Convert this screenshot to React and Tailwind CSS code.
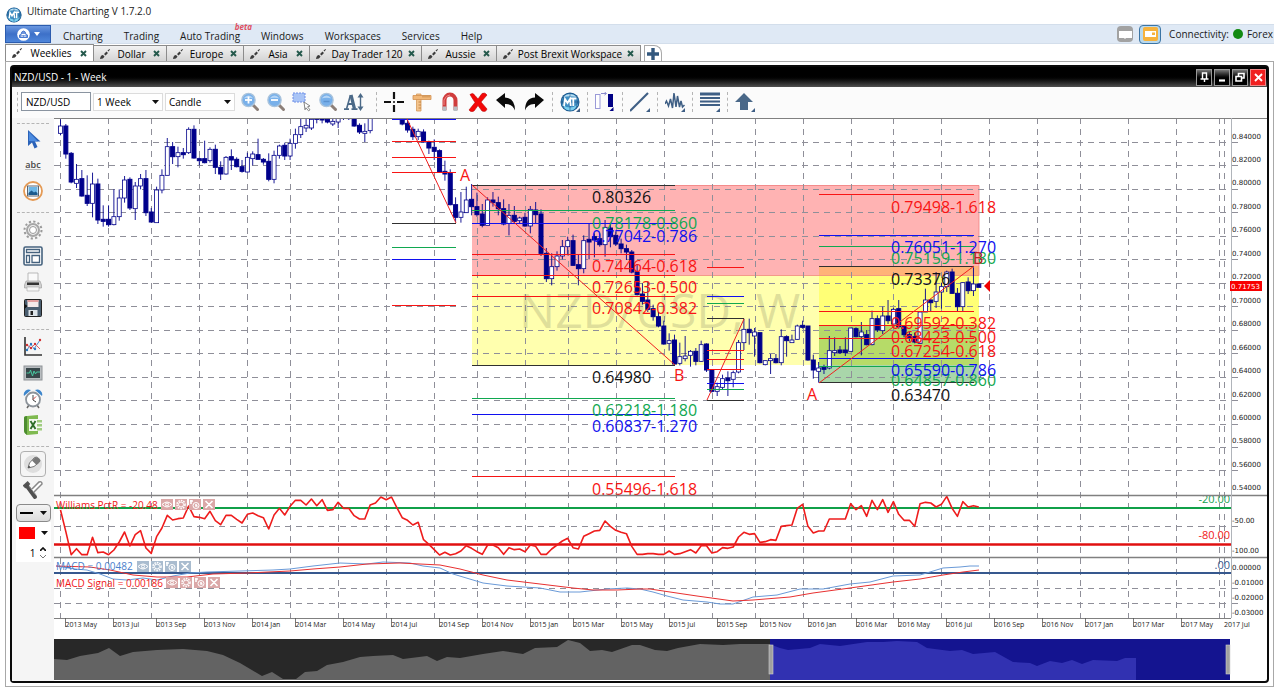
import React from 'react';

const X0 = 60.5;
const STEP = 5.339;
const PLOT_TOP = 118;

const menus = ['Charting', 'Trading', 'Auto Trading', 'Windows', 'Workspaces', 'Services', 'Help'];

const tabs = [
  { name: 'Weeklies', width: 'w-[89px]', active: true },
  { name: 'Dollar', width: 'w-[73px]' },
  { name: 'Europe', width: 'w-[77px]' },
  { name: 'Asia', width: 'w-[66px]' },
  { name: 'Day Trader 120', width: 'w-[112px]' },
  { name: 'Aussie', width: 'w-[75px]' },
  { name: 'Post Brexit Workspace', width: 'w-[144px]' },
];

// candles: high, body top, body bottom, low, filled (thirds of a unit below base)
const candleRuns = [
  {
    start: 0,
    base: 110,
    rows: [
      [28, 48, 70, 76, 0], [42, 48, 132, 146, 1], [126, 130, 216, 220, 1], [162, 208, 220, 234, 0],
      [180, 206, 258, 260, 1], [196, 256, 280, 288, 1], [188, 222, 280, 322, 0], [206, 222, 330, 342, 1],
      [286, 328, 334, 350, 1], [286, 328, 344, 350, 1], [238, 320, 344, 346, 0], [238, 264, 320, 332, 0],
      [198, 210, 264, 278, 0], [202, 208, 294, 300, 1], [216, 228, 296, 330, 0], [192, 206, 228, 238, 0],
      [180, 206, 308, 318, 1], [294, 306, 336, 338, 1], [230, 240, 338, 338, 0], [178, 196, 240, 250, 0],
      [84, 110, 196, 196, 0], [96, 110, 140, 162, 1], [110, 128, 140, 172, 0], [114, 128, 134, 146, 1],
      [52, 58, 128, 132, 0], [46, 58, 144, 146, 1], [142, 146, 152, 166, 1], [92, 146, 158, 160, 1],
      [112, 118, 152, 158, 0], [104, 118, 172, 192, 1], [154, 172, 192, 210, 1], [138, 142, 192, 194, 0],
      [118, 140, 150, 180, 1], [142, 148, 170, 172, 1], [150, 170, 184, 188, 1], [128, 142, 186, 188, 0],
      [124, 132, 146, 166, 0], [86, 134, 148, 148, 1], [144, 148, 156, 164, 1], [130, 154, 208, 214, 1],
      [122, 136, 208, 220, 0], [104, 108, 136, 146, 0], [98, 106, 138, 150, 1], [86, 100, 138, 150, 0],
      [56, 74, 100, 116, 0], [24, 50, 74, 84, 0], [20, 46, 54, 66, 0], [10, 28, 54, 60, 0],
      [0, 20, 28, 40, 1], [0, 20, 30, 40, 1], [10, 28, 36, 40, 1], [0, 34, 42, 48, 0],
      [0, 24, 36, 54, 0], [0, 18, 25, 30, 1], [0, 16, 26, 30, 0], [0, 20, 48, 50, 1],
      [40, 46, 66, 72, 1], [40, 64, 70, 96, 0], [0, 22, 62, 70, 0],
    ],
  },
  {
    start: 64,
    base: 110,
    rows: [
      [10, 24, 42, 46, 1], [30, 40, 60, 68, 1], [50, 58, 80, 90, 1], [56, 64, 80, 90, 0],
      [58, 66, 96, 98, 1], [92, 96, 114, 132, 1], [88, 112, 124, 150, 1], [118, 122, 186, 188, 1],
      [152, 184, 192, 212, 1], [178, 190, 284, 286, 1], [262, 284, 322, 336, 1], [246, 306, 322, 338, 0],
      [230, 270, 308, 308, 0], [222, 268, 290, 316, 1], [248, 290, 314, 320, 1], [282, 312, 346, 352, 1],
      [262, 270, 346, 346, 0],
    ],
  },
  {
    start: 81,
    base: 170,
    rows: [
      [66, 90, 98, 110, 1], [80, 98, 116, 136, 1], [88, 116, 162, 166, 1], [102, 136, 160, 196, 0],
      [108, 136, 154, 162, 1], [140, 144, 152, 160, 0], [128, 142, 168, 170, 1], [108, 118, 168, 190, 0],
      [96, 120, 134, 160, 1], [118, 132, 250, 258, 1], [234, 250, 326, 336, 1], [250, 290, 326, 346, 0],
      [244, 258, 290, 302, 0], [210, 230, 258, 268, 0], [200, 212, 230, 256, 0], [194, 212, 286, 288, 1],
      [254, 284, 296, 346, 1], [196, 212, 296, 310, 0], [162, 208, 216, 268, 1], [190, 200, 210, 262, 1],
      [190, 206, 224, 230, 1], [150, 172, 224, 260, 0], [158, 174, 200, 232, 1], [184, 196, 222, 228, 1],
      [206, 222, 236, 250, 1], [224, 236, 246, 270, 1], [240, 246, 306, 310, 1], [282, 306, 374, 376, 1],
      [340, 372, 394, 404, 1], [334, 390, 418, 426, 1], [404, 416, 440, 452, 1], [426, 440, 468, 472, 1],
      [452, 468, 522, 524, 1], [490, 512, 520, 542, 0], [494, 510, 582, 584, 1], [518, 560, 580, 586, 0],
      [498, 558, 566, 574, 0],
    ],
  },
  {
    start: 118,
    base: 250,
    rows: [
      [300, 304, 316, 350, 0], [294, 304, 334, 346, 1], [272, 284, 334, 336, 0], [280, 282, 360, 366, 1],
      [358, 360, 424, 428, 1], [398, 410, 424, 438, 0], [374, 386, 412, 418, 0], [364, 384, 392, 438, 1],
      [362, 368, 388, 412, 0], [270, 278, 366, 370, 0], [206, 238, 278, 300, 0], [206, 238, 248, 284, 1],
      [234, 246, 258, 320, 0], [248, 248, 338, 340, 1], [330, 332, 344, 346, 0], [312, 326, 332, 372, 0],
      [312, 326, 338, 340, 1], [238, 260, 338, 346, 0], [256, 260, 272, 320, 1], [254, 270, 278, 278, 0],
      [224, 228, 268, 270, 0], [212, 226, 232, 236, 1], [228, 228, 330, 332, 1], [314, 330, 360, 386, 1],
      [336, 354, 364, 398, 0], [344, 352, 358, 372, 1], [258, 302, 354, 358, 0], [262, 302, 308, 318, 0],
      [288, 300, 308, 312, 1], [262, 300, 308, 318, 1], [234, 234, 304, 304, 0], [232, 236, 260, 262, 1],
      [216, 246, 260, 316, 0], [240, 254, 284, 286, 1], [182, 206, 284, 286, 0], [196, 206, 240, 246, 1],
      [170, 198, 242, 252, 0], [150, 198, 212, 222, 1], [174, 178, 222, 224, 0], [150, 176, 230, 236, 1],
      [226, 230, 254, 262, 1], [246, 254, 262, 274, 1], [248, 260, 276, 280, 1], [184, 186, 280, 282, 0],
      [116, 150, 186, 186, 0], [148, 150, 158, 184, 1], [66, 126, 154, 174, 0], [98, 110, 126, 176, 0],
      [62, 66, 110, 126, 0], [56, 66, 130, 132, 1], [114, 130, 170, 184, 1], [96, 98, 170, 186, 0],
      [82, 96, 122, 132, 1], [52, 102, 122, 138, 0], [102, 102, 112, 112, 1],
    ],
  },
];

const williams = [
  75, 140, 209, 191, 209, 209, 157, 203, 201, 209, 195, 171, 141, 183, 149, 137, 189, 205, 155, 129, 91,
  105, 101, 99, 63, 95, 97, 101, 79, 107, 119, 91, 91, 103, 114, 88, 84, 92, 98, 132, 90, 70, 90, 64, 46,
  46, 60, 42, 62, 44, 76, 74, 52, 70, 70, 92, 102, 102, 60, 54, 36, 44, 36, 68, 98, 106, 120, 112, 164,
  178, 194, 210, 202, 210, 206, 198, 182, 190, 200, 208, 180, 180, 188, 208, 188, 194, 192, 200, 180, 184,
  208, 208, 192, 180, 168, 160, 188, 192, 154, 146, 138, 136, 108, 124, 136, 142, 146, 184, 208, 208, 206,
  206, 208, 208, 198, 208, 206, 200, 194, 204, 182, 182, 204, 200, 188, 190, 186, 156, 142, 148, 146, 172,
  170, 164, 166, 124, 122, 120, 70, 58, 124, 144, 138, 138, 102, 102, 102, 102, 56, 74, 62, 94, 46, 74, 44,
  82, 50, 88, 106, 106, 124, 56, 52, 54, 66, 58, 34, 70, 94, 50, 66, 62, 66,
];

const macd =
  '56,566 75,569 87,570 100,574 113,579 127,580 143,578 157,580 173,576 190,573 207,572 240,571 273,570 290,569 313,566 340,563 367,564 383,562 410,563 423,566 440,568 453,574 483,583 507,586 540,588 560,592 580,592 607,589 627,588 640,589 653,592 667,596 683,600 707,602 720,604 733,604 753,597 777,595 800,589 823,589 850,584 870,582 893,576 920,575 943,568 960,567 970,566 979,566';
const macdSignal =
  '56,566 90,567 110,570 133,575 157,577 187,577 213,574 247,573 290,571 313,569 340,567 367,564 400,563 440,565 460,569 483,575 507,580 540,584 573,588 593,590 617,590 640,589 650,589 670,592 697,596 733,601 753,600 790,597 813,593 850,588 893,582 920,579 943,575 963,572 979,570';

const navigator =
  '54,680 54,659 67,660 80,656 98,653 109,648 120,656 133,652 157,650 183,649 207,651 223,655 240,663 262,676 272,672 283,679 296,679 305,672 317,671 327,665 343,662 360,657 373,656 393,655 403,659 427,656 437,661 447,657 460,658 483,654 503,651 523,654 535,648 557,647 568,640 580,643 590,651 602,650 612,652 632,645 640,645 655,650 667,651 678,648 700,644 723,645 740,644 769,644 780,648 788,650 810,648 820,644 840,646 867,642 883,642 897,641 917,642 927,648 950,651 962,650 973,654 995,652 1013,662 1030,663 1037,666 1050,661 1062,663 1072,660 1082,664 1093,660 1117,661 1125,658 1136,658 1136,680';

const gridX = [
  60.5, 108.5, 151.5, 199.5, 247.5, 290.5, 338.5, 386.5, 434.5, 477.5, 525.5, 568.5, 616.5, 664.5, 712.5, 755.5,
  803.5, 851.5, 893.5, 941.5, 989.5, 1037.5, 1080.5, 1128.5, 1176.5, 1219.5, 1224.5,
];
const gridY = [142.5, 165.5, 189.5, 212.5, 236.5, 259.5, 283.5, 306.5, 330.5, 353.5, 377.5, 400.5, 424.5, 447.5, 470.5, 526.5, 588.5, 603.5];

const months = [
  '2013 May', '2013 Jul', '2013 Sep', '2013 Nov', '2014 Jan', '2014 Mar', '2014 May', '2014 Jul', '2014 Sep',
  '2014 Nov', '2015 Jan', '2015 Mar', '2015 May', '2015 Jul', '2015 Sep', '2015 Nov', '2016 Jan', '2016 Mar',
  '2016 May', '2016 Jul', '2016 Sep', '2016 Nov', '2017 Jan', '2017 Mar', '2017 May',
];

const prices = Array.from({ length: 16 }, (_, i) => ({
  label: (0.84 - i * 0.02).toFixed(5),
  y: 138.5 + i * 23.46,
}));

const RED = '#f81414';
const BLUE = '#1010f0';
const GREEN = '#10a850';
const BLACK = '#303030';

const fibLines = [
  { x1: 392, x2: 456, lines: [[119.5, BLUE], [141.5, RED], [157.5, RED], [172.5, RED], [223.5, BLACK], [247.5, GREEN], [259.5, BLUE], [305.5, RED]] },
  { x1: 472, x2: 675, lines: [[185.5, BLACK], [210.5, GREEN], [223.5, BLUE], [254.5, RED], [275.5, RED], [296.5, RED], [365.5, BLACK], [398.5, GREEN], [414.5, BLUE], [476.5, RED]] },
  { x1: 707, x2: 744, lines: [[267.5, RED], [296.5, BLUE], [303.5, GREEN], [318.5, BLACK], [350.5, RED], [359.5, RED], [369.5, RED], [383.5, BLUE], [389.5, GREEN], [400.5, BLACK]] },
  { x1: 819, x2: 974, lines: [[194.5, RED], [235.5, BLUE], [246.5, GREEN], [266.5, BLACK], [311.5, RED], [325.5, RED], [338.5, RED], [358.5, BLUE], [366.5, GREEN], [382.5, BLACK]] },
];

const trendLines = [
  [407, 119, 456, 223],
  [472, 185, 675, 365],
  [707, 400, 744, 319],
  [819, 383, 974, 266],
];

const fibLabels = [
  [592, 203, '0.80326', '#111'], [592, 229, '0.78178-0.860', GREEN], [592, 242, '0.77042-0.786', BLUE],
  [592, 272, '0.74464-0.618', RED], [592, 293, '0.72653-0.500', RED], [592, 314, '0.70842-0.382', RED],
  [592, 383, '0.64980', '#111'], [592, 416, '0.62218-1.180', GREEN], [592, 432, '0.60837-1.270', BLUE],
  [592, 495, '0.55496-1.618', RED], [891, 213, '0.79498-1.618', RED], [891, 264, '0.75159-1.180', GREEN],
  [891, 253, '0.76051-1.270', BLUE], [891, 285, '0.73376', '#111'], [891, 329, '0.69592-0.382', RED],
  [891, 343, '0.68423-0.500', RED], [891, 357, '0.67254-0.618', RED], [891, 386, '0.64857-0.860', GREEN],
  [891, 376, '0.65590-0.786', BLUE], [891, 401, '0.63470', '#111'], [460, 181, 'A', RED], [674, 381, 'B', RED],
  [807, 400, 'A', RED], [973, 264, 'B', '#c02020'],
];

const GlobeLogo = ({ size }) => (
  <svg width={size} height={size} viewBox="0 0 20 20" aria-hidden="true">
    <circle cx="10" cy="10" r="9.5" fill="#17558c" />
    <circle cx="10" cy="10" r="8.6" fill="#3f8fc4" />
    <path d="M1.6 12 Q10 19 18.4 12 Q15 18.6 10 18.6 Q4 18 1.6 12Z" fill="#7cd0ee" />
    <path d="M3 5 Q10 -1 17 5 Q10 3.4 3 5Z" fill="#b9def2" />
    <path d="M10 1v18M1 10h18M4 3.5q-3 6.5 0 13M16 3.5q3 6.5 0 13" stroke="#1c4f80" strokeWidth=".6" fill="none" />
    <path d="M4 14l1-7 2.5 4L10 7l.7 7M9.5 6.5h7M13.3 6.5V14" stroke="#fff" strokeWidth="1.8" fill="none" />
  </svg>
);

const Zoom = ({ sign }) => (
  <svg width="20" height="20" viewBox="0 0 20 20" aria-hidden="true">
    <path d="M13 13l4.5 4.5" stroke="#8c7f78" strokeWidth="3" strokeLinecap="round" />
    <circle cx="8.5" cy="8" r="6.6" fill="#78b0ea" stroke="#a9c3dc" strokeWidth="1.4" />
    <path d="M3.5 6.5q5-6 10 0q-5-1.5-10 0z" fill="#b5d5f6" />
    {sign !== 'rect' && <path d="M5 8h7" stroke="#fff" strokeWidth="1.8" />}
    {sign === 'in' && <path d="M8.5 4.5v7" stroke="#fff" strokeWidth="1.8" />}
    {sign === 'rect' && <path d="M5.5 9.5h6" stroke="#5b93d0" strokeWidth="1.5" />}
  </svg>
);

const Corner = () => <path d="M20 16v4h-4z" fill="#3f5f85" />;

const Icon = ({ children }) => (
  <svg width="20" height="20" viewBox="0 0 20 20" aria-hidden="true">
    {children}
  </svg>
);

const viewTools = [
  ['Zoom in', <Zoom sign="in" />],
  ['Zoom out', <Zoom sign="out" />],
  ['Select area', (
    <Icon>
      <rect x="1" y="1" width="12" height="9" fill="#a9c4f6" stroke="#6f8ee6" strokeDasharray="2 1" />
      <path d="M12 10l6 4-2.5.8 2.5 3-1.5 1-2.5-3-1 2z" fill="#fff" stroke="#777" strokeWidth=".9" />
    </Icon>
  )],
  ['Zoom to fit', <Zoom sign="rect" />],
  ['Auto scale', (
    <Icon>
      <path d="M2.5 17L6.5 3" stroke="#4c6a88" strokeWidth="1.6" fill="none" />
      <path d="M7 3l3.500 14" stroke="#4c6a88" strokeWidth="3.200" fill="none" />
      <path d="M4 12h6M0 17.200h5M7.500 17.200h6" stroke="#4c6a88" strokeWidth="1.800" fill="none" />
      <path d="M16.500 4v12" stroke="#4c6a88" strokeWidth="1.400" />
      <path d="M16.500 1l3 4.500h-6zM16.500 19l3-4.500h-6z" fill="#4c6a88" />
    </Icon>
  )],
];

const editTools = [
  ['Crosshair', (
    <Icon>
      <path d="M10 0v7M10 13v7M0 10h7M13 10h7" stroke="#111" strokeWidth="2.2" />
      <path d="M10 9v2" stroke="#111" strokeWidth="1.5" />
    </Icon>
  )],
  ['Ruler', (
    <Icon>
      <path d="M4.500 2h4.500v17H4.500z" fill="#f4c48c" stroke="#d69a5c" strokeWidth=".8" />
      <path d="M1 3.500h18v4H1z" fill="#f2b878" stroke="#d29150" strokeWidth=".8" />
      <path d="M11 3.500v2M13 3.500v2M15 3.500v2M17 3.500v2M6.500 10h2.500M6.500 13h2.500M6.500 16h2.500" stroke="#b87838" strokeWidth=".8" />
    </Icon>
  )],
  ['Snap', (
    <Icon>
      <path d="M4.500 18V8.500a5.500 6 0 0 1 11 0V18" fill="none" stroke="#d03c3c" strokeWidth="4" />
      <path d="M4.500 14.500V19M15.500 14.500V19" stroke="#b9bdc2" strokeWidth="4" />
      <path d="M4 13V8q2-5 6-5" fill="none" stroke="#ea8a8a" strokeWidth="1" />
    </Icon>
  )],
  ['Delete', (
    <Icon>
      <path d="M2 2.500q3-2.500 5 1l3 3.500 4-5.500q3-1.500 5 1.500l-6 7 6 7q-1 3.500-5 2l-4-5.500-4 5.500q-3 2-5-1l6-7.500z" fill="#f40808" stroke="#b80808" strokeWidth=".6" />
    </Icon>
  )],
  ['Undo', (
    <Icon>
      <path d="M0 8l9-7v4.500q10 .5 10 13q-2.500-7-10-6.500v4z" fill="#0a0a0a" />
    </Icon>
  )],
  ['Redo', (
    <Icon>
      <path d="M20 8l-9-7v4.500q-10 .5-10 13q2.500-7 10-6.500v4z" fill="#0a0a0a" />
    </Icon>
  )],
];

const studyTools = [
  ['Templates', (
    <span className="relative">
      <GlobeLogo size={20} />
      <svg className="absolute bottom-0 right-0" width="4" height="4" viewBox="0 0 4 4"><path d="M4 0v4H0z" fill="#3f5f85" /></svg>
    </span>
  )],
  ['Candles', (
    <Icon>
      <rect x=".5" y="2.5" width="4.5" height="14" fill="#fff" stroke="#9a9ad8" />
      <path d="M6 1.5h5M9.5 0l2 1.5-2 1.5" stroke="#8888cc" fill="none" />
      <rect x="13" y="2" width="5" height="13" fill="#000084" />
      <path d="M18.5 15v4h-4z" fill="#000084" />
    </Icon>
  )],
  ['Line', <Icon><path d="M0 19L18 1" stroke="#3f5f85" strokeWidth="2.2" /><Corner /></Icon>],
  ['Waves', (
    <Icon>
      <path d="M0 12l1.500-3 2 5 2-7 2 9L9 1l2 14 1.500-11 2 11 1.500-6 1.500 6 2-2" fill="none" stroke="#3f5f85" strokeWidth="1.5" />
      <Corner />
    </Icon>
  )],
  ['Levels', (
    <Icon>
      <path d="M0 2h20" stroke="#3f5f85" strokeWidth="3" />
      <path d="M0 6h20M0 9.5h20M0 13h20" stroke="#3f5f85" strokeWidth="2" />
      <Corner />
    </Icon>
  )],
  ['Arrow', <Icon><path d="M9 1l9 9h-5v8H5v-8H0z" fill="#4a6888" /><Corner /></Icon>],
];

const sideTools = [
  [
    ['Pointer', (
      <Icon>
        <path d="M5 1v16l4-3.5 2.5 6 3-1.5-2.5-5.5h5.5z" fill="#2a62b8" />
        <path d="M6 3v9l9 .5z" fill="#4b8be0" />
      </Icon>
    )],
    ['Text', <span className="border-b border-[#bbb] text-[9px] leading-none font-semibold text-[#444]">abc</span>],
    ['Picture', (
      <Icon>
        <circle cx="10" cy="10" r="9" fill="#fff" stroke="#e49a55" strokeWidth="1.8" />
        <rect x="4.5" y="5" width="11" height="10" fill="#fff" stroke="#5a6570" />
        <rect x="5.5" y="6" width="9" height="8" fill="#6db6e6" />
        <path d="M5.5 14v-2l3-2.5 2.5 2 1.5-1 2 1.5v2z" fill="#1c5a8c" />
      </Icon>
    )],
  ],
  [
    ['Settings', (
      <Icon>
        <circle cx="10" cy="10" r="8.5" fill="none" stroke="#9a9a9a" strokeWidth="2" strokeDasharray="2.2 2.25" />
        <circle cx="10" cy="10" r="6" fill="#eee" stroke="#a6a6a6" strokeWidth="2" />
        <circle cx="10" cy="10" r="3.5" fill="#fff" stroke="#999" />
      </Icon>
    )],
    ['Layout', (
      <Icon>
        <rect x="1" y="1" width="18" height="18" rx="1.5" fill="#fff" stroke="#45627e" strokeWidth="1.6" />
        <path d="M3.5 3.5h13v3h-13zM3.5 9.5h3v7h-3zM9 9.5h7.5v7H9z" fill="none" stroke="#45627e" strokeWidth="1.3" />
      </Icon>
    )],
    ['Print', (
      <Icon>
        <path d="M5 1h10v9H5z" fill="#fafafa" stroke="#aaa" strokeWidth=".8" />
        <path d="M3 9h14l1.5 4v3h-17v-3z" fill="#d0d0d0" stroke="#999" strokeWidth=".6" />
        <path d="M4 10.5h12v2.500H4z" fill="#333" />
        <path d="M4 15h12v4H4z" fill="#f6f6f6" stroke="#aaa" strokeWidth=".6" />
      </Icon>
    )],
    ['Save', (
      <Icon>
        <rect x="1.5" y="1.5" width="17" height="17" rx="1" fill="#4a5e70" stroke="#222" />
        <path d="M4.5 2h11v7h-11z" fill="#f3e9e9" />
        <path d="M4.5 2h11v2h-11z" fill="#e2a0a0" />
        <path d="M5.5 12h9v6h-9z" fill="#dce3e8" />
        <path d="M7.5 13h2.500v4H7.500z" fill="#222" />
        <path d="M1.5 6l3 2-3 3z" fill="#111" />
      </Icon>
    )],
  ],
  [
    ['Indicators', (
      <Icon>
        <path d="M2 0v18h17" fill="none" stroke="#333" strokeWidth="1.6" />
        <path d="M4 13l4-6 3 5 6-9" fill="none" stroke="#4b8fd0" />
        <path d="M4 8l4 3 4-4 5 5" fill="none" stroke="#e06060" />
        <g fill="#d03030"><circle cx="4" cy="8" r="1.2" /><circle cx="8" cy="11" r="1.2" /><circle cx="12" cy="7" r="1.2" /><circle cx="17" cy="3" r="1.2" /></g>
        <g fill="#2a78c0"><circle cx="4" cy="13" r="1.2" /><circle cx="8" cy="7" r="1.2" /><circle cx="12" cy="12" r="1.2" /></g>
      </Icon>
    )],
    ['Monitor', (
      <Icon>
        <rect x="1" y="3" width="18" height="14" fill="#b9bdc0" stroke="#909498" />
        <rect x="3" y="5" width="14" height="10" fill="#39474a" />
        <path d="M3.5 10h3l1-3 2 6 1.5-5 1.5 3 1-2h3.5" fill="none" stroke="#48c8a0" />
      </Icon>
    )],
    ['Alarm', (
      <Icon>
        <path d="M1 7a5 5 0 0 1 7-6zM19 7a5 5 0 0 0-7-6z" fill="#3d86cc" />
        <path d="M4 19l2-3M16 19l-2-3" stroke="#666" strokeWidth="1.5" />
        <circle cx="10" cy="10.5" r="7" fill="#fff" stroke="#8c939a" strokeWidth="1.8" />
        <path d="M10 6v5l3 2" fill="none" stroke="#444" />
        <path d="M10 10.5l3-3" stroke="#d04040" />
      </Icon>
    )],
    ['Export to Excel', (
      <Icon>
        <path d="M1 3q0-2 3-2l11-1v19l-11 1q-3-2-3-4z" fill="#7fba50" />
        <path d="M1 3q0-2 3-2v19q-3-2-3-4z" fill="#4d8c30" />
        <rect x="6" y="4" width="12" height="12" fill="#f4f9f0" />
        <path d="M14 5h5v2.500h-5zM14 9h5v2.500h-5zM14 13h5v2.500h-5z" fill="#a0cc80" />
        <path d="M7.5 6l5 8M12.5 6l-5 8" stroke="#2f6e28" strokeWidth="1.9" />
      </Icon>
    )],
  ],
  [
    ['Draw', (
      <Icon>
        <circle cx="10" cy="10" r="9" fill="#dedede" />
        <path d="M5 14l1.500-5 5-5.500q2-1 4 1t1 3.500l-5.500 4.500z" fill="#fff" stroke="#777" />
        <path d="M9 6.500l3-3q2-1 4 1t1 3l-3.500 3.500z" fill="#777" />
        <path d="M5 14l.8-2.500 1.700 1.700z" fill="#444" />
      </Icon>
    )],
    ['Tools', (
      <Icon>
        <path d="M1 7l5-4.500" stroke="#555" strokeWidth="4" />
        <path d="M4 6l8 11" stroke="#505050" strokeWidth="4" strokeLinecap="round" />
        <path d="M6 6l7 9" stroke="#999" strokeWidth="1" />
        <path d="M9 9l7-7q3-1 3 2l-8 8" stroke="#888" strokeWidth="1.5" fill="#fff" />
      </Icon>
    )],
  ],
];

const DropMark = () => (
  <svg className="pointer-events-none" width="7" height="4" viewBox="0 0 7 4" aria-hidden="true">
    <path d="M0 0h7L3.5 4z" fill="#111" />
  </svg>
);

const Grip = () => <span className="h-5 w-1 border-l border-dashed border-[#b5b5b5]" />;

const ToolButton = ({ label, width, children }) => (
  <button type="button" aria-label={label} className={`flex h-6 items-center justify-center ${width}`}>
    {children}
  </button>
);

const Combo = ({ label, value }) => (
  <div className="relative ml-[2px] h-[18px] w-[70px] border border-[#dcdcdc] bg-white">
    <select aria-label={label} className="h-full w-full appearance-none bg-transparent pl-[3px] text-[10px] leading-none">
      <option>{value}</option>
    </select>
    <span className="absolute right-[3px] top-[6px]">
      <DropMark />
    </span>
  </div>
);

const MenuBar = () => (
  <div className="ml-[5px] mr-[6px] flex h-5 items-stretch border-y border-[#d3deeb] bg-[#dfe9f5] text-[#1a1a1a]">
    <button type="button" aria-label="Application menu" className="flex w-[46px] items-center justify-center gap-1 border border-[#2c5cae] bg-gradient-to-b from-[#6b98e0] via-[#3d70c8] to-[#4e86da]">
      <svg width="13" height="13" viewBox="0 0 13 13">
        <circle cx="6.5" cy="6.5" r="6.3" fill="#fff" />
        <path d="M2.500 9.500V7l1.500-.5Q4.500 3 6.500 3T9 6.500l1.500.5v2.500z" fill="#6f96dc" stroke="#4a7ad0" />
        <path d="M5 9V7.500M8 9V7.500M4.500 6.500h4" stroke="#fff" />
      </svg>
      <svg width="6" height="4" viewBox="0 0 6 4"><path d="M0 0h6L3 4z" fill="#fff" /></svg>
    </button>
    <nav className="flex flex-1 items-center gap-[21px] pl-3 pt-1">
      {menus.map((m) => (
        <button key={m} type="button" className="relative">
          {m}
          {m === 'Auto Trading' && (
            <span className="absolute -right-3 -top-[5px] text-[8px] leading-none font-bold italic text-[#e05060]">beta</span>
          )}
        </button>
      ))}
    </nav>
    <div className="flex items-center">
      <button type="button" aria-label="Single view" className="flex h-4 w-4 items-center justify-center rounded-sm bg-[#a2a2a2]">
        <svg width="13" height="9" viewBox="0 0 13 9"><path d="M0 1h13v7H7l-1 1-1-1H0z" fill="#fff" /></svg>
      </button>
      <button type="button" aria-label="Docked view" className="ml-[6px] flex h-[19px] w-[22px] items-center justify-center rounded-sm border border-[#3b74a4] bg-[#b9d9ee]">
        <svg width="15" height="14" viewBox="0 0 15 14">
          <rect width="15" height="14" rx="2" fill="#f6b23c" />
          <path d="M2 4h11v6H2z" fill="#fff" />
          <rect x="9" y="5.5" width="3" height="2.5" fill="#f6b23c" />
        </svg>
      </button>
      <span className="ml-2">Connectivity:</span>
      <span className="ml-1 h-[10px] w-[10px] rounded-full bg-[#128a12]" />
      <span className="ml-1 mr-px">Forex</span>
    </div>
  </div>
);

const TabBar = () => (
  <div className="ml-[5px] flex h-[17px] items-end">
    {tabs.map((t) => (
      <div
        key={t.name}
        className={`flex items-center border-r border-t border-[#8c8c8c] px-[6px] ${t.width} ${
          t.active ? 'h-[17px] border-l bg-white' : 'h-4 bg-gradient-to-b from-[#f2f2f2] to-[#d4d4d4]'
        }`}
      >
        <svg width="10" height="10" viewBox="0 0 10 10" aria-hidden="true">
          <path d="M0 10q.5-4 3-4l1.500 1.500Q3.500 10 0 10zM4 5l1.500 1.500L8 4 6.500 2.500zM7.500 1.500L9.500 0l.5.5-1.500 2z" fill="#3c3c3c" />
        </svg>
        <button type="button" className="flex-1 whitespace-nowrap text-center leading-none">{t.name}</button>
        <button type="button" aria-label={`Close ${t.name}`}>
          <svg width="7" height="7" viewBox="0 0 7 7"><path d="M1 1l5 5M6 1L1 6" stroke="#24594c" strokeWidth="1.9" /></svg>
        </button>
      </div>
    ))}
    <button type="button" aria-label="Add workspace" className="ml-[3px] flex h-4 w-[18px] items-center justify-center rounded-tr-lg border border-b-0 border-[#aaa] bg-white">
      <svg width="12" height="12" viewBox="0 0 12 12"><path d="M6 0v12M0 6h12" stroke="#33587e" strokeWidth="3.4" /></svg>
    </button>
  </div>
);

const TitleBar = () => (
  <div className="flex h-5 items-center bg-gradient-to-b from-black from-40% to-[#505050] text-white">
    <h1 className="flex-1 pl-[2px]">NZD/USD - 1 - Week</h1>
    <div className="flex gap-[2px] pr-px">
      <button type="button" aria-label="Pin" className="flex h-[17px] w-4 items-center justify-center border border-[#999] bg-gradient-to-b from-[#777] to-black to-60%">
        <svg width="9" height="10" viewBox="0 0 9 10"><path d="M2.5 1h4v6h-4zM.5 7h8M4.5 7v3" fill="none" stroke="#fff" strokeWidth="1.4" /></svg>
      </button>
      <button type="button" aria-label="Minimise" className="flex h-[17px] w-4 items-center justify-center border border-[#999] bg-gradient-to-b from-[#777] to-black to-60%">
        <svg width="9" height="10" viewBox="0 0 9 10"><path d="M1 8.5h6" stroke="#fff" strokeWidth="2.2" /></svg>
      </button>
      <button type="button" aria-label="Restore" className="flex h-[17px] w-4 items-center justify-center border border-[#999] bg-gradient-to-b from-[#777] to-black to-60%">
        <svg width="10" height="10" viewBox="0 0 10 10"><path d="M3.5 4V1.500H9V6H7M1 4.500h5.500V9H1z" fill="none" stroke="#fff" strokeWidth="1.6" /></svg>
      </button>
      <button type="button" aria-label="Close" className="flex h-[17px] w-4 items-center justify-center border border-[#e88] bg-[#f02020]">
        <svg width="9" height="9" viewBox="0 0 9 9"><path d="M1 1l7 7M8 1L1 8" stroke="#fff" strokeWidth="1.9" /></svg>
      </button>
    </div>
  </div>
);

const Toolbar = () => (
  <div className="flex h-[31px] items-center bg-[#fbfbfb] pb-[2px] pl-[5px]">
    <Grip />
    <input aria-label="Symbol" defaultValue="NZD/USD" className="h-[19px] w-[70px] border border-[#8a94a0] bg-white pl-1 text-[10px]" />
    <Combo label="Period" value="1 Week" />
    <Combo label="Chart type" value="Candle" />
    <div className="ml-[2px] flex">
      {viewTools.map(([label, icon]) => (
        <ToolButton key={label} label={label} width="w-[26px]">{icon}</ToolButton>
      ))}
    </div>
    <span className="w-[9px]" />
    <Grip />
    <div className="flex">
      {editTools.map(([label, icon]) => (
        <ToolButton key={label} label={label} width="w-7">{icon}</ToolButton>
      ))}
    </div>
    {studyTools.map(([label, icon]) => (
      <div key={label} className="ml-1 flex items-center">
        <Grip />
        <ToolButton label={label} width="w-[27px]">{icon}</ToolButton>
      </div>
    ))}
  </div>
);

const Sidebar = () => (
  <aside className="flex w-[42px] shrink-0 flex-col items-center bg-[#f5f5f5]">
    {sideTools.map((group, g) => (
      <div key={g} className="flex flex-col items-center">
        <span className={`w-8 border-b border-dashed border-[#b5b5b5] ${g === 0 ? 'mb-[2px] h-[6px]' : 'mb-1 h-[9px]'}`} />
        {group.map(([label, icon]) => (
          <button
            key={label}
            type="button"
            aria-label={label}
            className={`flex h-[26px] w-[26px] items-center justify-center ${label === 'Draw' ? 'rounded-sm border border-[#b0b0b0]' : ''}`}
          >
            {icon}
          </button>
        ))}
      </div>
    ))}
    <button type="button" aria-label="Line style" className="mt-px flex h-[18px] w-[35px] items-center justify-between rounded-sm border border-[#8a8a8a] bg-gradient-to-b from-[#f4f4f4] to-[#dcdcdc] px-[3px]">
      <span className="h-[2px] w-[13px] bg-black" />
      <DropMark />
    </button>
    <button type="button" aria-label="Line colour" className="flex h-[22px] w-[35px] items-center justify-between bg-white px-[3px]">
      <span className="h-3 w-4 bg-[#ff0000]" />
      <DropMark />
    </button>
    <div className="flex h-[18px] w-[35px] items-center bg-white">
      <input aria-label="Line width" defaultValue="1" className="w-5 bg-transparent text-right text-[10px]" />
      <span className="ml-1 flex flex-col gap-1">
        <button type="button" aria-label="Increase width"><svg width="6" height="4" viewBox="0 0 6 4" className="block"><path d="M0 4l3-3 3 3" fill="none" stroke="#111" strokeWidth="1.6" /></svg></button>
        <button type="button" aria-label="Decrease width"><svg width="6" height="4" viewBox="0 0 6 4" className="block"><path d="M0 0l3 3 3-3" fill="none" stroke="#777" /></svg></button>
      </span>
    </div>
  </aside>
);

const Candle = ({ index, base, row }) => {
  const [high, top, bottom, low, filled] = row.map((v, i) => (i < 4 ? base + v / 3 : v));
  const x = X0 + index * STEP;
  return (
    <g stroke="#00008b">
      <path d={`M${x} ${high}V${top}M${x} ${bottom}V${low}`} strokeWidth=".9" />
      <rect
        x={x - 2}
        y={top}
        width="4"
        height={Math.max(bottom - top, 1)}
        fill={filled ? '#00008b' : '#fff'}
        strokeWidth={filled ? 1 : 0.8}
      />
    </g>
  );
};

// eye, gear, alert and close glyphs after an indicator name
const IndicatorControls = ({ x, y, color }) => (
  <g transform={`translate(${x} ${y})`} stroke="#fff" fill="none">
    {[0, 14, 28, 42].map((dx) => (
      <rect key={dx} x={dx} width="12" height="11" fill={color} stroke="none" />
    ))}
    <path d="M1 5.500q5-5 10 0q-5 5-10 0z" />
    <circle cx="6" cy="5.500" r="1.5" />
    <circle cx="20" cy="5.500" r="4" strokeDasharray="1.6 1" strokeWidth="1.5" />
    <circle cx="20" cy="5.500" r="2.500" />
    <circle cx="35" cy="6.500" r="3" />
    <path d="M30 1v4M29 2h3M35 5v2h1.500M44.500 2l7 7M51.500 2l-7 7" strokeWidth="1.6" />
  </g>
);

const Chart = () => (
  <svg viewBox={`54 ${PLOT_TOP} 1213 514`} className="block h-auto w-full" fontFamily='"Open Sans", sans-serif' role="img" aria-label="NZD/USD weekly chart">
    <defs>
      <clipPath id="plot">
        <rect x="54" y={PLOT_TOP} width="1177" height="377" />
      </clipPath>
    </defs>
    <rect x="54" y={PLOT_TOP} width="1213" height="514" fill="#fff" />

    {/* zones */}
    <rect x="472" y="185" width="507" height="90" fill="#ffb3b3" />
    <rect x="472" y="275" width="507" height="90" fill="#ffffae" />
    <rect x="819" y="266" width="160" height="9" fill="#ffb378" />
    <rect x="819" y="275" width="160" height="50" fill="#ffff76" />
    <rect x="819" y="325" width="160" height="40" fill="#b6db68" />
    <rect x="819" y="365" width="160" height="18" fill="#a9d6aa" />
    <path d="M472 185.5H979V275.5H472" fill="none" stroke="#f08080" strokeWidth=".8" />

    <g stroke="#8f8f99" strokeDasharray="6 5">
      {gridY.map((y) => (
        <path key={y} d={`M54 ${y}H1231`} />
      ))}
      {gridX.map((x) => (
        <path key={x} d={`M${x} 118V618`} />
      ))}
    </g>
    <g stroke="#8f8f99">
      {gridY.map((y) => (
        <path key={y} d={`M1231 ${y}h7`} />
      ))}
    </g>

    <text x="519" y="328" fontSize="48" fill="#808060" fillOpacity=".25">NZD/USD, W</text>

    <g clipPath="url(#plot)">
      {candleRuns.map((run) =>
        run.rows.map((row, i) => <Candle key={run.start + i} index={run.start + i} base={run.base} row={row} />)
      )}
      {fibLines.map((set) =>
        set.lines.map(([y, color]) => (
          <path key={`${set.x1}-${y}`} d={`M${set.x1} ${y}H${set.x2}`} stroke={color} strokeWidth="1.2" />
        ))
      )}
      {trendLines.map(([x1, y1, x2, y2]) => (
        <line key={x1} x1={x1} y1={y1} x2={x2} y2={y2} stroke="#f02020" />
      ))}
      {fibLabels.map(([x, y, text, color]) => (
        <text key={`${x}-${y}`} x={x} y={y} fontSize="16" fill={color}>{text}</text>
      ))}
      <path d="M990 280v12l-6-6z" fill="#f00000" />
    </g>

    {/* Williams %R */}
    <path d="M54 508H1231" stroke="#10a048" strokeWidth="2" />
    <path d="M54 544.5H1231" stroke="#e01010" strokeWidth="2.5" />
    <polyline
      points={williams.map((v, i) => `${X0 + i * STEP},${485 + v / 3}`).join(' ')}
      fill="none"
      stroke="#ee1c1c"
      strokeWidth="1.6"
      strokeLinejoin="round"
    />
    <text x="56" y="509" fontSize="10" fill="#f01818">Williams PctR = -20.48</text>
    <IndicatorControls x={161} y={499} color="#dba8a8" />
    <text x="1230" y="503" fontSize="11" textAnchor="end" fill="#14a050">-20.00</text>
    <text x="1230" y="539" fontSize="11" textAnchor="end" fill="#f01818">-80.00</text>

    {/* MACD */}
    <path d="M54 573H1231" stroke="#36588e" strokeWidth="2" />
    <polyline points={macd} fill="none" stroke="#6a9ad8" />
    <polyline points={macdSignal} fill="none" stroke="#e83030" />
    <text x="56" y="570" fontSize="10" fill="#4a80cc">MACD = 0.00482</text>
    <IndicatorControls x={137} y={561} color="#a9bccf" />
    <text x="56" y="587" fontSize="10" fill="#f01818">MACD Signal = 0.00186</text>
    <IndicatorControls x={166} y={577} color="#dba8a8" />
    <text x="1230" y="569" fontSize="11" textAnchor="end" fill="#36588e">.00</text>

    <g stroke="#808080">
      <path d="M54 118.5H1267" strokeWidth="1" />
      <path d="M54 495.5H1267M54 557.5H1267" strokeWidth="1.5" />
      <path d="M54 618.5H1231" />
      <path d="M1231.5 118V618" stroke="#b0b4ba" />
    </g>

    <g fontSize="7" fontFamily='"DejaVu Sans", sans-serif' fill="#1a1a1a">
      {prices.map((p) => (
        <text key={p.label} x="1232" y={p.y}>{p.label}</text>
      ))}
      <text x="1232" y="523">-50.00</text>
      <text x="1232" y="553">-100.00</text>
      <text x="1232" y="570">0.00000</text>
      <text x="1232" y="585">-0.01000</text>
      <text x="1232" y="600">-0.02000</text>
      <text x="1232" y="615">-0.03000</text>
      <rect x="1230" y="281" width="32" height="10" fill="#f80000" />
      <text x="1231" y="289" fill="#fff">0.71753</text>
    </g>

    <g fontSize="7" fill="#1a1a1a">
      {months.map((m, i) => (
        <g key={m}>
          <path d={`M${gridX[i] + 5} 618v9`} stroke="#555" strokeWidth=".8" />
          <text x={gridX[i] + 5} y="627">{m}</text>
        </g>
      ))}
      <text x="1224" y="627">2017 Jul</text>
    </g>
  </svg>
);

const Navigator = () => (
  <svg viewBox="54 639 1213 41" className="block h-auto w-full" role="img" aria-label="Visible range">
    <rect x="54" y="639" width="716" height="41" fill="#282828" />
    <rect x="770" y="639" width="460" height="41" fill="#141490" />
    <clipPath id="nav-left"><rect x="54" y="639" width="716" height="41" /></clipPath>
    <clipPath id="nav-right"><rect x="770" y="639" width="460" height="41" /></clipPath>
    <polygon points={navigator} fill="#636363" clipPath="url(#nav-left)" />
    <polygon points={navigator} fill="#3131b1" clipPath="url(#nav-right)" />
    <rect x="769" y="645" width="4" height="29" fill="#a0a0a0" stroke="#d0d0d0" strokeWidth=".6" />
    <rect x="1226" y="645" width="4" height="29" fill="#a0a0a0" stroke="#d0d0d0" strokeWidth=".6" />
  </svg>
);

export default function App() {
  return (
    <div className="min-h-screen bg-white font-['Open_Sans',sans-serif] text-[10px] leading-4 text-black">
      <header className="flex h-6 items-start pl-[6px]">
        <span className="pt-[7px]">
          <GlobeLogo size={16} />
        </span>
        <span className="pl-[5px] pt-[3px] text-[#222]">Ultimate Charting V 1.7.2.0</span>
      </header>
      <MenuBar />
      <TabBar />
      <main className="ml-[5px] mr-[6px] border border-[#a8a8a8] px-1 py-[3px]">
        <section className="rounded-sm border-2 border-[#0a0a0a] bg-white">
          <TitleBar />
          <Toolbar />
          <div className="flex">
            <Sidebar />
            <div className="min-w-0 flex-1">
              <Chart />
              <div className="pt-[7px] pb-px">
                <Navigator />
              </div>
            </div>
          </div>
        </section>
      </main>
    </div>
  );
}
